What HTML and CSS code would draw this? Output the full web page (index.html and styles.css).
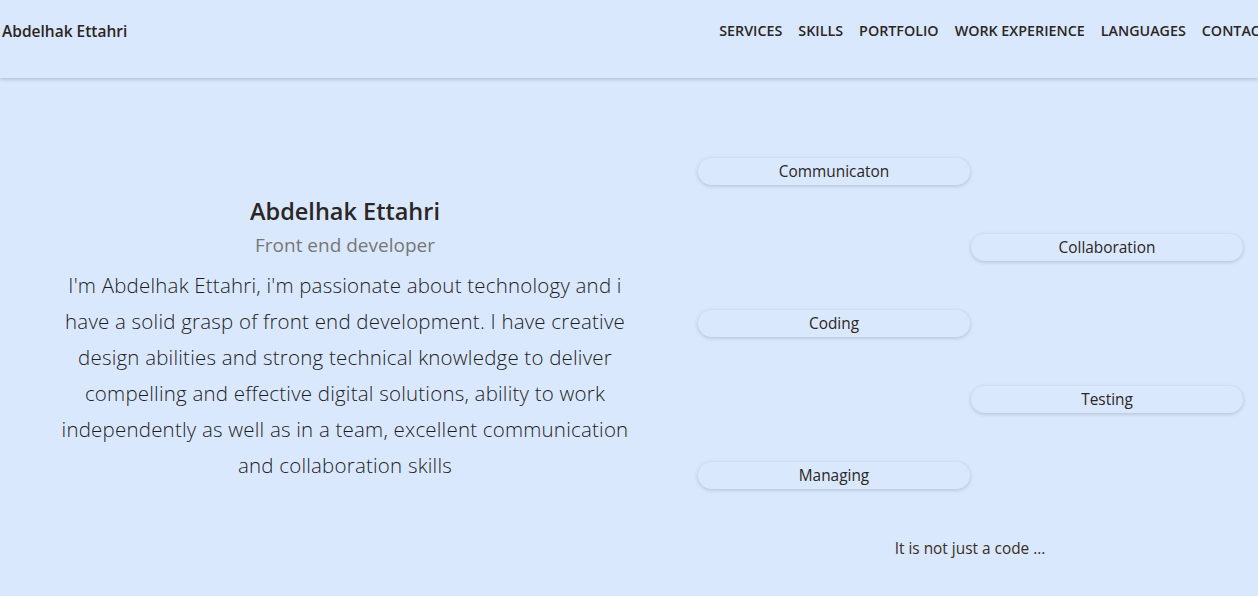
FILE: index.html
```html
<!DOCTYPE html>
<html lang="en">
<head>
<meta charset="utf-8">
<title>Abdelhak Ettahri</title>
<link rel="stylesheet" href="styles.css">
</head>
<body>
<header class="topbar">
  <div class="brand">Abdelhak Ettahri</div>
  <nav class="nav">
    <a href="#">SERVICES</a>
    <a href="#">SKILLS</a>
    <a href="#">PORTFOLIO</a>
    <a href="#">WORK EXPERIENCE</a>
    <a href="#">LANGUAGES</a>
    <a href="#">CONTACT</a>
  </nav>
</header>
<main class="hero">
  <section class="intro">
    <h1 class="name">Abdelhak Ettahri</h1>
    <h2 class="role">Front end developer</h2>
    <p class="about">I'm Abdelhak Ettahri, i'm passionate about technology and i have a solid grasp of front end development. I have creative design abilities and strong technical knowledge to deliver compelling and effective digital solutions, ability to work independently as well as in a team, excellent communication and collaboration skills</p>
  </section>
  <section class="skills">
    <div class="pills">
      <div class="pill left">Communicaton</div>
      <div class="pill right">Collaboration</div>
      <div class="pill left">Coding</div>
      <div class="pill right">Testing</div>
      <div class="pill left">Managing</div>
    </div>
    <p class="motto">It is not just a code ...</p>
  </section>
</main>
</body>
</html>
```
FILE: styles.css
```css
html, body {
  margin: 0;
  padding: 0;
}
body {
  background: #dae8fd;
  font-family: "Open Sans", "Noto Sans", sans-serif;
  color: #2b2b2b;
  width: 1258px;
  overflow: hidden;
  height: 596px;
}
.topbar {
  height: 78px;
  box-sizing: border-box;
  display: flex;
  align-items: flex-start;
  justify-content: space-between;
  padding: 21px 0 0 2px;
  box-shadow: 0 2px 3px rgba(0, 0, 0, 0.15);
  white-space: nowrap;
}
.brand {
  font-weight: 600;
  font-size: 15.5px;
  line-height: 20px;
  color: #2b2623;
}
.nav {
  display: flex;
  gap: 16px;
  margin-right: -10px;
}
.nav a {
  text-decoration: none;
  color: #2b2623;
  font-weight: 600;
  font-size: 14.3px;
  line-height: 20px;
}
.hero {
  display: grid;
  grid-template-columns: 690px 568px;
  padding-top: 80px;
}
.intro {
  text-align: center;
  padding: 38px 57px 0 57px;
}
.name {
  margin: 0;
  font-size: 23.5px;
  font-weight: 600;
  line-height: 30px;
  color: #2b2623;
}
.role {
  margin: 5px 0 0;
  font-size: 19px;
  font-weight: 400;
  line-height: 28px;
  color: #777;
}
.about {
  margin: 8px 0 0;
  font-size: 20.5px;
  letter-spacing: 0.2px;
  font-weight: 300;
  line-height: 36px;
  color: #1e1e1e;
}
.skills {
  padding-left: 8px;
}
.pills {
  display: flex;
  flex-direction: column;
  gap: 49px;
}
.pill {
  width: 272px;
  height: 27px;
  line-height: 27px;
  border-radius: 14px;
  text-align: center;
  font-size: 15.4px;
  color: #2b2623;
  box-shadow: 0 1px 4px rgba(0, 0, 0, 0.18);
}
.pill.left { align-self: flex-start; }
.pill.right { margin-left: 273px; }
.motto {
  width: 544px;
  text-align: center;
  margin: 50px 0 0;
  font-size: 15.4px;
  line-height: 20px;
  color: #3a2e22;
}
```
